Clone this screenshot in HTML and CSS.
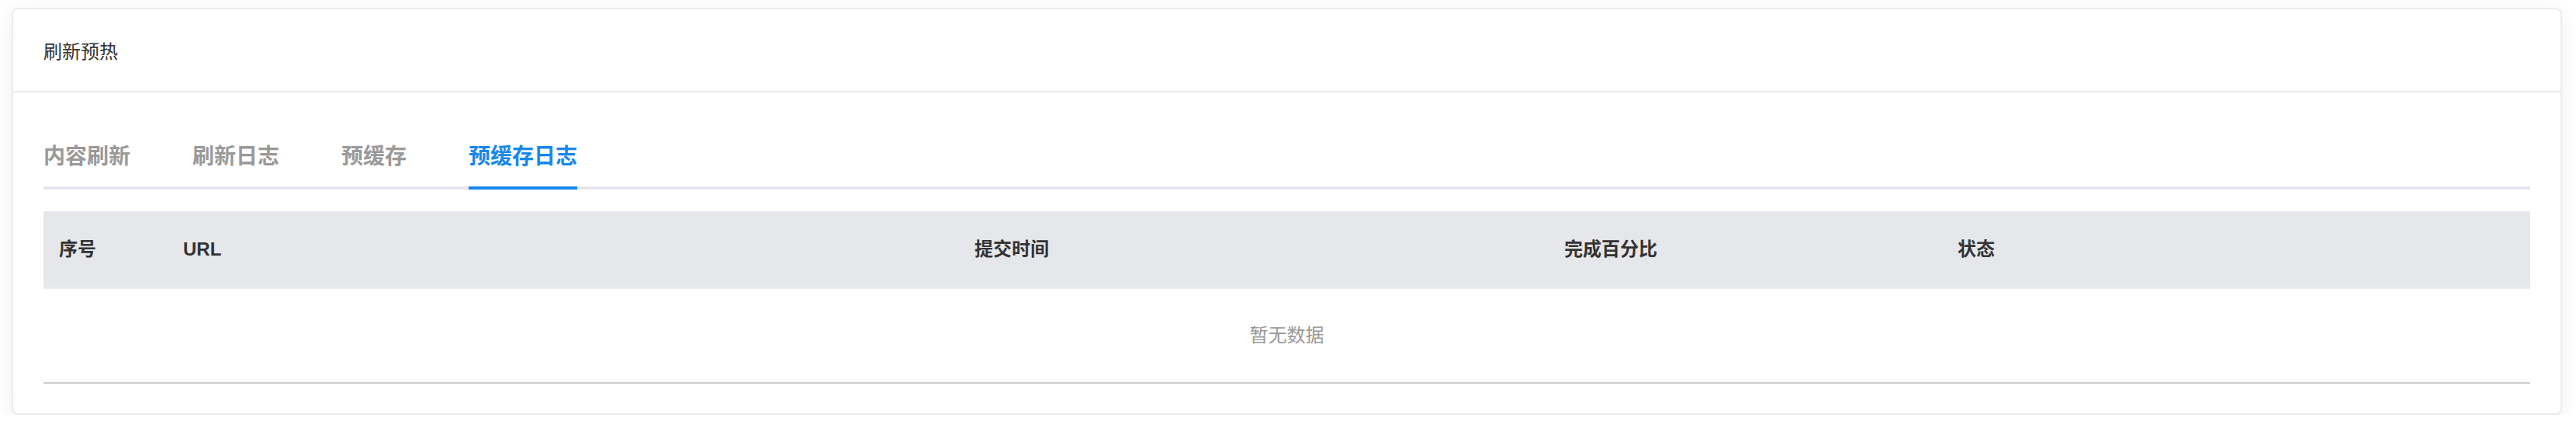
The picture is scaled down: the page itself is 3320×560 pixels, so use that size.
FILE: index.html
```html
<!DOCTYPE html>
<html lang="zh-CN">
<head>
  <meta charset="UTF-8" />
  <meta name="viewport" content="width=device-width, initial-scale=1.0" />
  <title>刷新预热</title>
  <link rel="stylesheet" href="styles.css">
</head>
<body>
  <div class="card">
    <div class="card-header">刷新预热</div>
    <div class="card-body">
      <div class="tabs">
        <div class="tab">内容刷新</div>
        <div class="tab">刷新日志</div>
        <div class="tab">预缓存</div>
        <div class="tab active">预缓存日志</div>
      </div>
      <table class="log-table">
        <colgroup>
          <col style="width: 160px">
          <col style="width: 1020px">
          <col style="width: 760px">
          <col style="width: 507px">
          <col>
        </colgroup>
        <thead>
          <tr>
            <th>序号</th>
            <th>URL</th>
            <th>提交时间</th>
            <th>完成百分比</th>
            <th>状态</th>
          </tr>
        </thead>
        <tbody>
          <tr>
            <td class="empty" colspan="5">暂无数据</td>
          </tr>
        </tbody>
      </table>
    </div>
  </div>
</body>
</html>
```
FILE: styles.css
```css
body { margin: 0; padding: 10px 18px 0 15px; background: #fff;
  font-family: "Liberation Sans", "Noto Sans CJK SC", sans-serif; color: #333; }
.card { background: #fff; border: 2px solid #e9ebf1; border-radius: 8px;
  box-shadow: 0 6px 24px rgba(0,0,0,0.07); }
.card-header { height: 105px; display: flex; align-items: center; padding: 0 39px;
  font-size: 24px; color: #333; border-bottom: 2px solid #e8ebf0; }
.card-body { padding: 63px 39px 38px; }
.tabs { display: flex; gap: 80px; border-bottom: 4px solid #e4e6ec; }
.tab { font-size: 28px; line-height: 40px; font-weight: bold; color: #999;
  padding-bottom: 18px; margin-bottom: -4px; border-bottom: 4px solid transparent; }
.tab.active { color: #1787ea; border-bottom-color: #1787ea; }
.log-table { width: 100%; margin-top: 28px; border-collapse: separate; border-spacing: 0;
  table-layout: fixed; }
.log-table th, .log-table td { box-sizing: border-box; padding: 0 20px; line-height: 30px; }
.log-table th { height: 100px; background: #e6e7eb; text-align: left;
  font-size: 24px; font-weight: bold; color: #333; border-bottom: 2px solid #eceef2; }
.log-table td.empty { height: 122px; padding: 0; text-align: center; font-size: 24px;
  color: #999; border-bottom: 2px solid #ccc; }
```
